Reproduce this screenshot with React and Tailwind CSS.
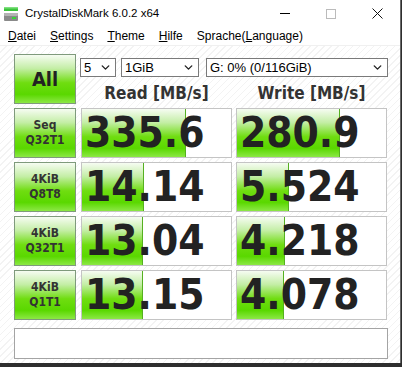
import { ChevronDown } from "lucide-react";

const results = [
  { label: ["Seq", "Q32T1"], read: "335.6", readBar: 104, write: "280.9", writeBar: 103 },
  { label: ["4KiB", "Q8T8"], read: "14.14", readBar: 62, write: "5.524", writeBar: 52 },
  { label: ["4KiB", "Q32T1"], read: "13.04", readBar: 61, write: "4.218", writeBar: 48 },
  { label: ["4KiB", "Q1T1"], read: "13.15", readBar: 61, write: "4.078", writeBar: 47 }
];

const greenFill =
  "bg-[linear-gradient(to_bottom,#f6fcf2_0%,#c4eea6_28%,#6fdd10_58%,#5ad800_82%,#8ce845_100%)]";

const AppIcon = () => (
  <svg width="16" height="16" viewBox="0 0 16 16">
    <rect x="1" y="1" width="14" height="4" fill="#3cc43c" />
    <rect x="1" y="1" width="14" height="1.5" fill="#7fe07f" />
    <rect x="1" y="7" width="14" height="8" rx="1" fill="#8a8a8a" />
    <rect x="1" y="7" width="14" height="3" rx="1" fill="#b4b4b4" />
    <rect x="9" y="11" width="4" height="2" fill="#38d438" />
  </svg>
);

const Select = ({ value, width }) => (
  <div className={`flex h-[19px] items-center justify-between border border-[#7a7a7a] bg-white pl-[3px] pr-[3px] text-[13px] leading-none text-black ${width}`}>
    <span>{value}</span>
    <ChevronDown size={13} strokeWidth={2.6} className="text-[#222]" />
  </div>
);

const ResultCell = ({ value, bar }) => (
  <div className="relative h-[50px] w-[151px] overflow-hidden border border-[#c4c4c4] bg-white">
    <div className={`absolute inset-y-0 left-0 border-r border-[#55b020] ${greenFill}`} style={{ width: bar }} />
    <span className="relative block pl-[3px] font-['DejaVu_Sans_Condensed',sans-serif] text-[42px] font-bold leading-[48px] text-[#222]">
      {value}
    </span>
  </div>
);

export default function App() {
  return (
    <div className="h-[367px] w-[402px] bg-[#2e2e2e]">
      <div className="flex h-[363px] w-[401px] flex-col border-r border-[#6a6a6a] bg-white font-['Liberation_Sans',sans-serif] text-black">
        <div className="flex h-[27px] items-center">
          <div className="ml-[3px] mr-[6px]">
            <AppIcon />
          </div>
          <span className="text-[11.5px]">CrystalDiskMark 6.0.2 x64</span>
          <div className="ml-auto flex items-center">
            <div className="flex h-[27px] w-[46px] items-center justify-center">
              <div className="h-px w-[10px] bg-black" />
            </div>
            <div className="flex h-[27px] w-[46px] items-center justify-center">
              <div className="h-[10px] w-[10px] border border-[#bbb]" />
            </div>
            <div className="flex h-[27px] w-[46px] items-center justify-center">
              <svg width="11" height="11" viewBox="0 0 11 11">
                <path d="M0.5 0.5 L10.5 10.5 M10.5 0.5 L0.5 10.5" stroke="#111" strokeWidth="1" />
              </svg>
            </div>
          </div>
        </div>

        <div className="flex h-[18px] items-center gap-[14px] pl-[8px] text-[12px]">
          <span><u>D</u>atei</span>
          <span><u>S</u>ettings</span>
          <span><u>T</u>heme</span>
          <span><u>H</u>ilfe</span>
          <span>Sprache(<u>L</u>anguage)</span>
        </div>
        <div className="h-px bg-[#f0f0f0]" />

        <div className="flex flex-1 flex-col gap-[4px] bg-[repeating-linear-gradient(135deg,#ffffff_0px,#ffffff_4px,#f3f3f3_4px,#f3f3f3_5px)] pl-[14px] pt-[8px]">
          <div className="flex h-[50px] gap-[4px]">
            <div className={`flex h-[50px] w-[62px] items-center justify-center border border-[#7f9a7c] ${greenFill} font-['DejaVu_Sans_Condensed',sans-serif] text-[20px] font-bold text-[#222]`}>
              All
            </div>
            <div className="flex flex-col pt-[4px]">
              <div className="flex gap-[5px]">
                <Select value="5" width="w-[36px]" />
                <Select value="1GiB" width="w-[78px]" />
                <div className="ml-[2px]">
                  <Select value="G: 0% (0/116GiB)" width="w-[182px]" />
                </div>
              </div>
              <div className="mt-[6px] flex gap-[4px] pl-px font-['DejaVu_Sans_Condensed',sans-serif] text-[17px] font-bold leading-[20px] text-[#333]">
                <div className="w-[151px] text-center">Read [MB/s]</div>
                <div className="w-[151px] text-center">Write [MB/s]</div>
              </div>
            </div>
          </div>

          {results.map((row) => (
            <div key={row.label.join(" ")} className="flex">
              <div className={`mr-[5px] flex h-[50px] w-[62px] flex-col items-center justify-center border border-[#7f9a7c] ${greenFill} font-['DejaVu_Sans_Condensed',sans-serif] text-[12px] font-bold leading-[15px] text-[#333]`}>
                <span>{row.label[0]}</span>
                <span>{row.label[1]}</span>
              </div>
              <div className="mr-[4px]">
                <ResultCell value={row.read} bar={row.readBar} />
              </div>
              <ResultCell value={row.write} bar={row.writeBar} />
            </div>
          ))}

          <div className="mt-[4px] h-[31px] w-[374px] border border-[#a4a4a4] bg-white" />
        </div>
      </div>
    </div>
  );
}
